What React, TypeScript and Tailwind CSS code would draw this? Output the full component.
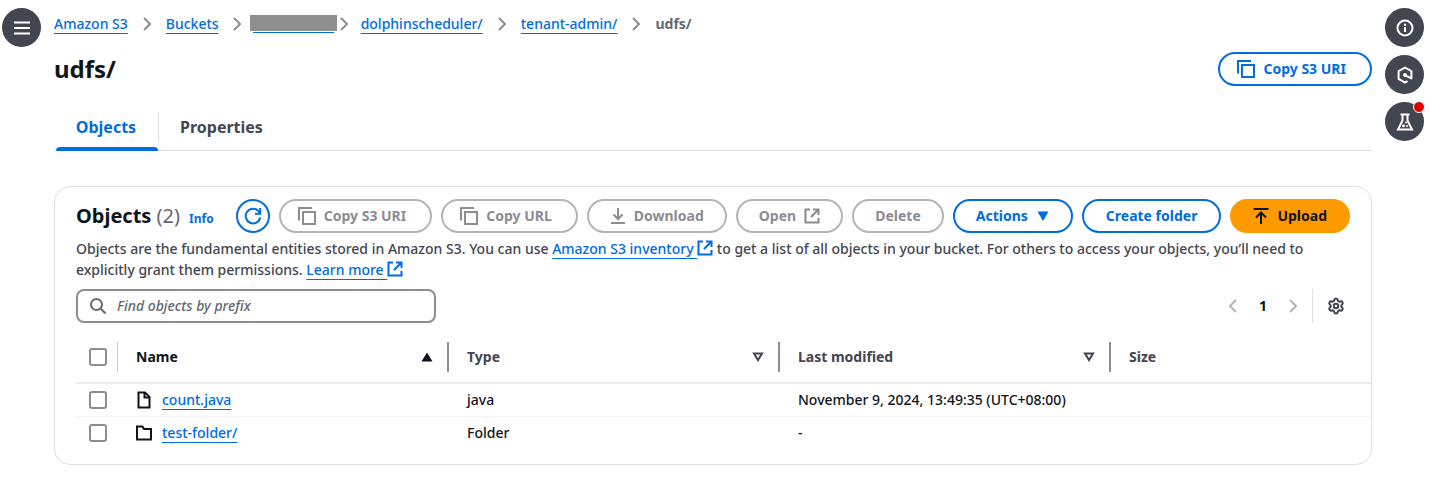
import React from 'react';
import { Settings } from 'lucide-react';

type IconProps = { className?: string };

function CopyIcon({ className = '' }: IconProps) {
  return (
    <svg className={`w-[18px] h-[18px] ${className}`} viewBox="0 0 18 18" fill="none" stroke="currentColor" strokeWidth={2} aria-hidden="true">
      <path d="M1 13.5V1h13" />
      <path d="M5 5h12v12H5z" />
    </svg>
  );
}

function ExternalIcon({ className = 'w-4 h-4' }: IconProps) {
  return (
    <svg className={className} viewBox="0 0 16 16" fill="none" stroke="currentColor" strokeWidth={2} aria-hidden="true">
      <path d="M6 1.5H1.5v13h13V10" />
      <path d="M9 1.5h5.5V7M14.5 1.5 7 9" />
    </svg>
  );
}

function RefreshIcon() {
  return (
    <svg className="w-[18px] h-[18px]" viewBox="0 0 18 18" fill="none" stroke="currentColor" strokeWidth={2} aria-hidden="true">
      <path d="M16.2 10.5A7.3 7.3 0 1 1 14.5 4.2L16.2 6.5" />
      <path d="M16.2 1v5.8H11" />
    </svg>
  );
}

function DownloadIcon() {
  return (
    <svg className="w-4 h-4" viewBox="0 0 16 16" fill="none" stroke="currentColor" strokeWidth={2} aria-hidden="true">
      <path d="M8 0v11M3.5 6.5 8 11l4.5-4.5M1 15h14" />
    </svg>
  );
}

function UploadIcon() {
  return (
    <svg className="w-4 h-4" viewBox="0 0 16 16" fill="none" stroke="currentColor" strokeWidth={2} aria-hidden="true">
      <path d="M8 16V5M3 9.5 8 4.5l5 5M0.5 1h15" />
    </svg>
  );
}

function SearchIcon() {
  return (
    <svg className="w-4 h-4" viewBox="0 0 16 16" fill="none" stroke="currentColor" strokeWidth={2} aria-hidden="true">
      <circle cx="6.5" cy="6.5" r="5.5" />
      <path d="m10.5 10.5 5 5" />
    </svg>
  );
}

function ChevronIcon({ className = '' }: IconProps) {
  return (
    <svg className={`w-2 h-3.5 ${className}`} viewBox="0 0 8 14" fill="none" stroke="currentColor" strokeWidth={2} aria-hidden="true">
      <path d="m1 1 6 6-6 6" />
    </svg>
  );
}

function FileIcon() {
  return (
    <svg className="w-4 h-[18px]" viewBox="0 0 16 18" fill="none" stroke="currentColor" strokeWidth={2} aria-hidden="true">
      <path d="M2.500 1.500h6.500L13.500 6v10.500h-11z" />
      <path d="M8.500 1.500v5h5" />
    </svg>
  );
}

function FolderIcon() {
  return (
    <svg className="w-4 h-4" viewBox="0 0 16 16" fill="none" stroke="currentColor" strokeWidth={2} aria-hidden="true">
      <path d="M1 1.5h5.500L8 4h7v10.500H1z" />
    </svg>
  );
}

function MenuIcon() {
  return (
    <svg className="w-4 h-4" viewBox="0 0 16 16" fill="none" stroke="currentColor" strokeWidth={2} aria-hidden="true">
      <path d="M0 2.5h16M0 8h16M0 13.500h16" />
    </svg>
  );
}

function InfoIcon() {
  return (
    <svg className="w-[18px] h-[18px]" viewBox="0 0 18 18" fill="none" stroke="currentColor" strokeWidth={2} aria-hidden="true">
      <circle cx="9" cy="9" r="7.5" />
      <path d="M9 8v5M9 4.800v2" />
    </svg>
  );
}

function HexagonIcon() {
  return (
    <svg className="w-[18px] h-[18px]" viewBox="0 0 18 18" fill="none" stroke="currentColor" strokeWidth={2} strokeLinejoin="round" aria-hidden="true">
      <path d="M11.5 15.200 9 16.600 2.600 12.900V5.200L9 1.500l6.400 3.700v7.200L9.500 9.500" />
      <circle cx="9" cy="9" r="2" fill="currentColor" stroke="none" />
    </svg>
  );
}

function FlaskIcon() {
  return (
    <svg className="w-[18px] h-[18px]" viewBox="0 0 18 18" fill="none" stroke="currentColor" strokeWidth={2} aria-hidden="true">
      <path d="M4.5 1.5h9M6.500 1.500v6L2 16.500h14l-4.500-9v-6" />
      <circle cx="7.5" cy="12.800" r="1.500" fill="currentColor" stroke="none" />
      <circle cx="10" cy="9.500" r="1" fill="currentColor" stroke="none" />
      <circle cx="11" cy="13" r="1" fill="currentColor" stroke="none" />
    </svg>
  );
}

function SortIcon({ active = false }: { active?: boolean }) {
  return active ? (
    <svg className="w-3 h-3 mr-[14px]" viewBox="0 0 12 12" fill="currentColor" aria-hidden="true">
      <path d="m6 1.500 5.500 9H.5z" />
    </svg>
  ) : (
    <svg className="w-3 h-3 mr-[14px]" viewBox="0 0 12 12" fill="none" stroke="currentColor" strokeWidth={2} aria-hidden="true">
      <path d="M2 2.500h8L6 9z" />
    </svg>
  );
}

const variants = {
  primary: 'bg-[#ff9900] border-[#ff9900] text-[#0f141a]',
  normal: 'bg-white border-[#006ce0] text-[#006ce0]',
  disabled: 'bg-white border-[#b4b4bb] text-[#8c8c94]',
};

interface ButtonProps {
  variant?: keyof typeof variants;
  className?: string;
  children: React.ReactNode;
}

function Button({ variant = 'normal', className = '', children }: ButtonProps) {
  return (
    <button
      type="button"
      disabled={variant === 'disabled'}
      className={`h-[34px] flex items-center justify-center gap-2 shrink-0 rounded-full border-2 text-sm font-bold whitespace-nowrap ${variants[variant]} ${className}`}
    >
      {children}
    </button>
  );
}

function RoundButton({ label, children }: { label: string; children: React.ReactNode }) {
  return (
    <button
      type="button"
      aria-label={label}
      className="relative w-[39px] h-[39px] rounded-full bg-[#424650] text-white flex items-center justify-center"
    >
      {children}
    </button>
  );
}

const linkClass = 'text-[#006ce0] underline underline-offset-4 decoration-1';

const rows = [
  { name: 'count.java', type: 'java', modified: 'November 9, 2024, 13:49:35 (UTC+08:00)', icon: FileIcon },
  { name: 'test-folder/', type: 'Folder', modified: '-', icon: FolderIcon },
];

const columns = [
  { label: 'Name', sorted: true },
  { label: 'Type', sorted: false },
  { label: 'Last modified', sorted: false },
];

function Checkbox({ label }: { label: string }) {
  return (
    <input
      type="checkbox"
      aria-label={label}
      className="block ml-[13px] w-[18px] h-[18px] appearance-none rounded-[3px] border-2 border-[#8c8c94] bg-white"
    />
  );
}

function Breadcrumbs() {
  return (
    <nav aria-label="Breadcrumbs" className="h-12 flex items-center text-sm font-medium text-[#8c8c94]">
      <a href="#s3" className={linkClass}>Amazon S3</a>
      <ChevronIcon className="mx-[15px]" />
      <a href="#buckets" className={linkClass}>Buckets</a>
      <ChevronIcon className="ml-[14px] mr-[9px]" />
      <a href="#bucket" aria-label="Bucket" className="w-[87px] h-[18px] px-[3px] flex">
        <span className="w-full h-full border-b border-[#006ce0] relative">
          <span className="absolute -left-[3px] -right-[3px] top-0 h-4 bg-[#8f8f8f]" />
        </span>
      </a>
      <ChevronIcon className="ml-[3px] mr-[13px]" />
      <a href="#dolphinscheduler" className={linkClass}>dolphinscheduler/</a>
      <ChevronIcon className="mx-[15px]" />
      <a href="#tenant-admin" className={linkClass}>tenant-admin/</a>
      <ChevronIcon className="mx-[15px]" />
      <span className="font-bold text-[#656871]">udfs/</span>
    </nav>
  );
}

function Tabs() {
  return (
    <div role="tablist" className="mt-[19px] flex border-b border-[#dedee3] text-base font-bold">
      <button type="button" role="tab" aria-selected="true" className="relative h-[45px] w-[104px] pb-px text-[#006ce0]">
        Objects
        <span className="absolute left-[2px] right-0 -bottom-px h-1 rounded-t-sm bg-[#006ce0]" />
      </button>
      <span className="w-px h-[30px] mt-[7px] bg-[#dedee3]" />
      <button type="button" role="tab" aria-selected="false" className="h-[45px] px-[21px] pb-px text-[#424650]">
        Properties
      </button>
    </div>
  );
}

function ObjectsTable() {
  return (
    <table className="w-full table-fixed border-collapse text-left text-sm">
      <colgroup>
        <col className="w-[42px]" />
        <col className="w-[331px]" />
        <col className="w-[331px]" />
        <col className="w-[331px]" />
        <col />
      </colgroup>
      <thead>
        <tr className="h-[51px] border-b-2 border-[#ebebf0] text-[#424650]">
          <th scope="col" className="p-0">
            <div className="h-[30px] flex items-center justify-between">
              <Checkbox label="Select all objects" />
              <span className="w-px h-full bg-[#c6c6cd]" />
            </div>
          </th>
          {columns.map((column) => (
            <th key={column.label} scope="col" className={`p-0 pl-[18px] font-bold ${column.sorted ? 'text-[#0f141a]' : ''}`}>
              <div className="h-[30px] flex items-center">
                <span className="flex-1">{column.label}</span>
                <SortIcon active={column.sorted} />
                <span className="w-[2px] h-full bg-[#8c8c94]" />
              </div>
            </th>
          ))}
          <th scope="col" className="p-0 pl-[18px] font-bold">Size</th>
        </tr>
      </thead>
      <tbody className="font-medium text-[#0f141a]">
        {rows.map((row) => (
          <tr key={row.name} className="h-[33px] border-b border-[#f3f3f7] last:border-b-0">
            <td className="p-0"><Checkbox label={`Select ${row.name}`} /></td>
            <td className="p-0 pl-[18px]">
              <div className="flex items-center gap-[10px]">
                <row.icon />
                <a href={`#${row.name}`} className={linkClass}>{row.name}</a>
              </div>
            </td>
            <td className="p-0 pl-[18px]">{row.type}</td>
            <td className="p-0 pl-[18px]">{row.modified}</td>
            <td className="p-0 pl-[18px]" />
          </tr>
        ))}
      </tbody>
    </table>
  );
}

export default function App() {
  return (
    <div className="flex bg-white font-['Noto_Sans',sans-serif] text-[#0f141a]">
      {/* Navigation toggle */}
      <div className="w-[54px] shrink-0 pl-[2px] pt-2">
        <RoundButton label="Open navigation"><MenuIcon /></RoundButton>
      </div>

      <main className="flex-1 min-w-0 pb-4">
        <Breadcrumbs />

        <div className="mt-1 flex items-center justify-between">
          <h1 className="text-2xl font-bold">udfs/</h1>
          <Button className="pl-[21px] pr-6">
            <CopyIcon className="-ml-1" />
            Copy S3 URI
          </Button>
        </div>

        <Tabs />

        {/* Objects panel */}
        <section className="mt-[35px] rounded-2xl border border-[#dedee3] pl-[21px] pt-3 pb-[15px]">
          <div className="pr-[21px]">
            <div className="flex items-center justify-between">
              <div className="flex items-baseline">
                <h2 className="text-xl font-bold">
                  Objects <span className="font-normal text-[#656871]">(2)</span>
                </h2>
                <a href="#info" className="ml-[9px] text-xs font-bold text-[#006ce0]">Info</a>
              </div>
              <div className="flex gap-[9px]">
                <Button className="w-[34px]"><RefreshIcon /></Button>
                <Button variant="disabled" className="pl-[21px] pr-6"><CopyIcon className="-ml-1" />Copy S3 URI</Button>
                <Button variant="disabled" className="pl-[21px] pr-6"><CopyIcon className="-ml-1" />Copy URL</Button>
                <Button variant="disabled" className="px-[21px]"><DownloadIcon />Download</Button>
                <Button variant="disabled" className="px-[21px]">Open<ExternalIcon /></Button>
                <Button variant="disabled" className="px-[21px]">Delete</Button>
                <Button className="px-[21px]">
                  Actions
                  <svg className="w-3.5 h-3.5" viewBox="0 0 14 14" fill="currentColor" aria-hidden="true"><path d="M1.5 2.500h11L7 12z" /></svg>
                </Button>
                <Button className="px-[22px]">Create folder</Button>
                <Button variant="primary" className="px-[21px]"><UploadIcon />Upload</Button>
              </div>
            </div>

            <p className="mt-[5px] text-sm leading-[21px] font-medium text-[#424650]">
              Objects are the fundamental entities stored in Amazon S3. You can use{' '}
              <a href="#inventory" className={linkClass}>Amazon S3 inventory <ExternalIcon className="inline w-4 h-4 align-[-2px]" /></a>
              {' '}to get a list of all objects in your bucket. For others to access your objects, you’ll need to{' '}
              <span>explicitly grant them permissions.</span>{' '}
              <a href="#learn-more" className={linkClass}>Learn more <ExternalIcon className="inline w-4 h-4 align-[-2px]" /></a>
            </p>

            <div className="mt-[9px] flex items-center justify-between">
              <label className="w-[360px] h-[34px] flex items-center gap-[11px] px-3 rounded-lg border-2 border-[#8c8c94] text-[#656871]">
                <SearchIcon />
                <input
                  type="text"
                  aria-label="Find objects by prefix"
                  placeholder="Find objects by prefix"
                  className="flex-1 min-w-0 bg-transparent text-sm font-medium outline-none placeholder:italic placeholder:text-[#656871]"
                />
              </label>
              <div className="flex items-center text-sm font-bold">
                <button type="button" aria-label="Previous page" className="text-[#b4b4bb]"><ChevronIcon className="rotate-180" /></button>
                <button type="button" aria-label="Page 1" className="mx-[22px]">1</button>
                <button type="button" aria-label="Next page" className="text-[#b4b4bb]"><ChevronIcon /></button>
                <span className="w-px h-[34px] ml-[15px] mr-[14px] bg-[#dedee3]" />
                <button type="button" aria-label="Preferences" className="mr-[5px] text-[#424650]">
                  <Settings className="w-[18px] h-[18px]" strokeWidth={2.7} />
                </button>
              </div>
            </div>
          </div>

          <div className="mt-[9px]">
            <ObjectsTable />
          </div>
        </section>
      </main>

      {/* Tool panel toggles */}
      <div className="w-[58px] shrink-0 flex flex-col gap-2 pl-[13px] pt-2">
        <RoundButton label="Info"><InfoIcon /></RoundButton>
        <RoundButton label="Assistant"><HexagonIcon /></RoundButton>
        <RoundButton label="Experiments">
          <FlaskIcon />
          <span className="absolute -top-px -right-px w-3 h-3 rounded-full border border-white bg-[#db0000]" />
        </RoundButton>
      </div>
    </div>
  );
}
